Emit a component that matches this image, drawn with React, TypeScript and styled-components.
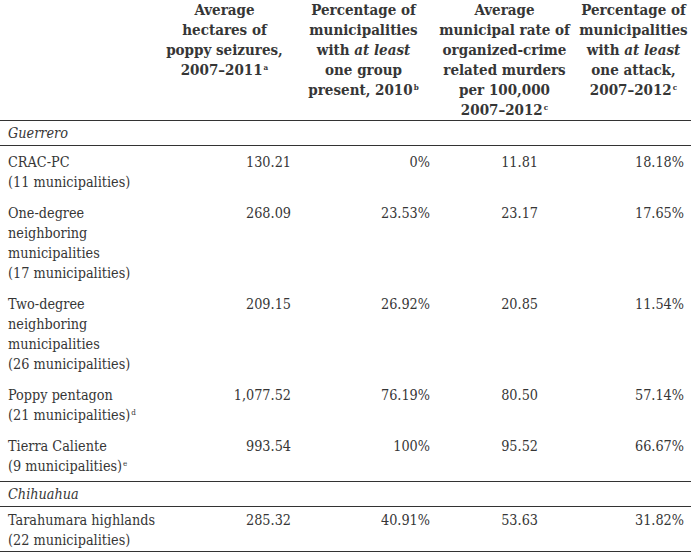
import React from 'react';
import styled, { createGlobalStyle } from 'styled-components';

const GlobalStyle = createGlobalStyle`
  html, body {
    margin: 0;
    padding: 0;
    background: #ffffff;
  }
`;

const Table = styled.table`
  width: 691px;
  border-collapse: collapse;
  table-layout: fixed;
  font-family: 'DejaVu Serif Condensed', 'DejaVu Serif', serif;
  font-size: 14.3px;
  line-height: 20px;
  color: #363636;
`;

const HeadCell = styled.th`
  padding: 0;
  text-align: center;
  vertical-align: top;
  font-size: 15px;
  font-weight: bold;
  white-space: nowrap;
  border-bottom: 1px solid #333333;
`;

const GroupCell = styled.td`
  padding: 2px 8px 2px;
  font-style: italic;
  border-top: 1px solid #333333;
  border-bottom: 1px solid #333333;
`;

const LabelCell = styled.td<{ $last?: boolean }>`
  padding: ${(p) => (p.$last ? '3px 3px 1px 8px' : '6px 3px 5px 8px')};
  vertical-align: top;
  white-space: nowrap;
  border-bottom: ${(p) => (p.$last ? '1px solid #333333' : 'none')};
`;

const NumCell = styled.td<{ $pad: number; $last?: boolean }>`
  padding: ${(p) => (p.$last ? `3px ${p.$pad}px 1px 3px` : `6px ${p.$pad}px 5px 3px`)};
  text-align: right;
  vertical-align: top;
  white-space: nowrap;
  border-bottom: ${(p) => (p.$last ? '1px solid #333333' : 'none')};
`;

const Sup = styled.sup`
  font-size: 8px;
  line-height: 0;
  vertical-align: 5px;
  margin-left: 1px;
`;

type Row = {
  label: React.ReactNode;
  values: string[];
};

type Group = {
  name: string;
  rows: Row[];
};

const pads = [3, 3, 38, 7];

const groups: Group[] = [
  {
    name: 'Guerrero',
    rows: [
      {
        label: (
          <>
            CRAC-PC
            <br />
            (11 municipalities)
          </>
        ),
        values: ['130.21', '0%', '11.81', '18.18%'],
      },
      {
        label: (
          <>
            One-degree
            <br />
            neighboring
            <br />
            municipalities
            <br />
            (17 municipalities)
          </>
        ),
        values: ['268.09', '23.53%', '23.17', '17.65%'],
      },
      {
        label: (
          <>
            Two-degree
            <br />
            neighboring
            <br />
            municipalities
            <br />
            (26 municipalities)
          </>
        ),
        values: ['209.15', '26.92%', '20.85', '11.54%'],
      },
      {
        label: (
          <>
            Poppy pentagon
            <br />
            (21 municipalities)<Sup>d</Sup>
          </>
        ),
        values: ['1,077.52', '76.19%', '80.50', '57.14%'],
      },
      {
        label: (
          <>
            Tierra Caliente
            <br />
            (9 municipalities)<Sup>e</Sup>
          </>
        ),
        values: ['993.54', '100%', '95.52', '66.67%'],
      },
    ],
  },
  {
    name: 'Chihuahua',
    rows: [
      {
        label: (
          <>
            Tarahumara highlands
            <br />
            (22 municipalities)
          </>
        ),
        values: ['285.32', '40.91%', '53.63', '31.82%'],
      },
    ],
  },
];

export default function App() {
  return (
    <>
      <GlobalStyle />
      <Table>
        <colgroup>
          <col style={{ width: 155 }} />
          <col style={{ width: 139 }} />
          <col style={{ width: 139 }} />
          <col style={{ width: 143 }} />
          <col style={{ width: 115 }} />
        </colgroup>
        <thead>
          <tr>
            <HeadCell />
            <HeadCell>
              Average
              <br />
              hectares of
              <br />
              poppy seizures,
              <br />
              2007–2011<Sup>a</Sup>
            </HeadCell>
            <HeadCell>
              Percentage of
              <br />
              municipalities
              <br />
              with <i>at least</i>
              <br />
              one group
              <br />
              present, 2010<Sup>b</Sup>
            </HeadCell>
            <HeadCell>
              Average
              <br />
              municipal rate of
              <br />
              organized-crime
              <br />
              related murders
              <br />
              per 100,000
              <br />
              2007–2012<Sup>c</Sup>
            </HeadCell>
            <HeadCell>
              Percentage of
              <br />
              municipalities
              <br />
              with <i>at least</i>
              <br />
              one attack,
              <br />
              2007–2012<Sup>c</Sup>
            </HeadCell>
          </tr>
        </thead>
        <tbody>
          {groups.map((g, gi) => (
            <React.Fragment key={g.name}>
              <tr>
                <GroupCell colSpan={5}>{g.name}</GroupCell>
              </tr>
              {g.rows.map((r, ri) => {
                const last = ri === g.rows.length - 1 && gi === groups.length - 1;
                return (
                  <tr key={ri}>
                    <LabelCell $last={last}>{r.label}</LabelCell>
                    {r.values.map((v, vi) => (
                      <NumCell key={vi} $pad={pads[vi]} $last={last}>
                        {v}
                      </NumCell>
                    ))}
                  </tr>
                );
              })}
            </React.Fragment>
          ))}
        </tbody>
      </Table>
    </>
  );
}
